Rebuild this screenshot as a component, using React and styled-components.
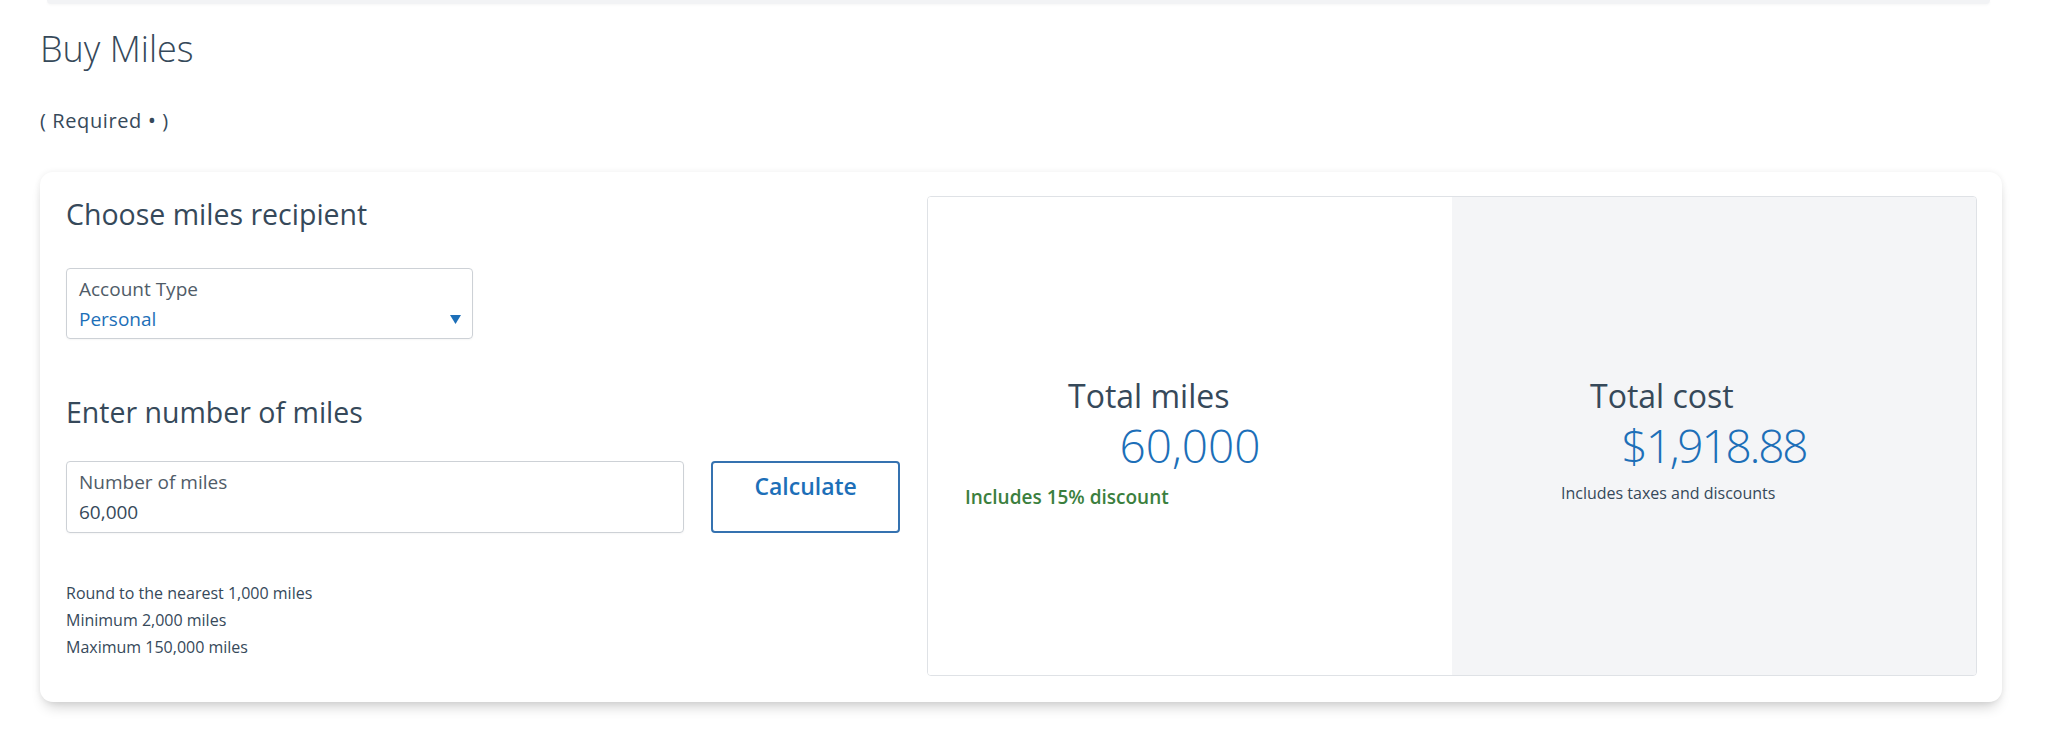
import React from "react";
import styled, { createGlobalStyle } from "styled-components";

const GlobalStyle = createGlobalStyle`
  html, body { margin: 0; padding: 0; background: #ffffff; }
  body { font-family: "Open Sans", "Noto Sans", Arial, sans-serif; color: #36495a; }
  * { box-sizing: border-box; }
`;

const Page = styled.div`
  width: 2047px;
  padding: 0 45px 46px 40px;
`;

const TopStrip = styled.div`
  height: 4px;
  margin: 0 12px 0 7px;
  background: #f2f3f5;
  border-radius: 0 0 8px 8px;
  box-shadow: 0 1px 3px rgba(0, 0, 0, 0.04);
`;

const Title = styled.h1`
  margin: 23px 0 0 0;
  font-size: 36px;
  line-height: 44px;
  font-weight: 300;
  color: #36495a;
`;

const Required = styled.div`
  margin-top: 38px;
  height: 24px;
  font-size: 20px;
  line-height: 24px;
  letter-spacing: 0.6px;
  color: #36495a;
`;

const Dot = styled.span`
  font-size: 22px;
  line-height: 0;
`;

const Card = styled.section`
  margin-top: 39px;
  background: #fff;
  border-radius: 13px;
  padding: 24px 25px 26px 26px;
  display: grid;
  grid-template-columns: 834px 1050px;
  column-gap: 27px;
  box-shadow: 0 9px 14px -5px rgba(0, 0, 0, 0.2), 0 0 6px rgba(0, 0, 0, 0.07);
`;

const LeftCol = styled.div`
  display: flex;
  flex-direction: column;
  padding-bottom: 15px;
`;

const SectionTitle = styled.h2`
  margin: ${(p) => p.$mt || 0}px 0 0 0;
  font-size: 28.5px;
  line-height: 36px;
  font-weight: 400;
  color: #36495a;
`;

const Field = styled.div`
  width: ${(p) => p.$w}px;
  height: ${(p) => p.$h}px;
  margin-top: ${(p) => p.$mt || 0}px;
  border: 1px solid #cdd1d6;
  border-radius: 4px;
  padding: 8px 11px 0 12px;
  display: flex;
  flex-direction: column;
  gap: 6px;
  box-shadow: 0 1px 2px rgba(0, 0, 0, 0.04);
`;

const FieldLabel = styled.div`
  font-size: 19px;
  line-height: 24px;
  color: #505c68;
`;

const FieldValue = styled.div`
  display: flex;
  align-items: center;
  justify-content: space-between;
  font-size: 19px;
  line-height: 24px;
  color: ${(p) => (p.$accent ? "#1d6fb8" : "#36495a")};
`;

const InputRow = styled.div`
  display: flex;
  gap: 27px;
  margin-top: 31px;
`;

const Button = styled.button`
  width: 189px;
  height: 72px;
  border: 2px solid #3572b0;
  border-radius: 4px;
  background: #fff;
  color: #1d6fb8;
  font-family: "Open Sans", Arial, sans-serif;
  font-weight: 600;
  font-size: 23px;
  line-height: 28px;
  padding: 9px 0 0 0;
  display: flex;
  justify-content: center;
  align-items: flex-start;
  cursor: pointer;
`;

const Hints = styled.div`
  margin-top: 47px;
  font-size: 16px;
  line-height: 27px;
  color: #36495a;
`;

const Summary = styled.div`
  display: grid;
  grid-template-columns: 1fr 1fr;
  border: 1px solid #dfe2e6;
  border-radius: 4px;
  overflow: hidden;
`;

const SummaryPane = styled.div`
  background: ${(p) => (p.$shaded ? "#f4f5f7" : "#ffffff")};
  display: flex;
  flex-direction: column;
  align-items: flex-start;
  padding-top: 179px;
`;

const PaneLabel = styled.div`
  margin-left: ${(p) => p.$ml}px;
  font-size: 32px;
  line-height: 40px;
  font-weight: 400;
  color: #36495a;
`;

const PaneAmount = styled.div`
  align-self: center;
  margin-top: 3px;
  font-size: 46px;
  line-height: 52px;
  font-weight: 300;
  letter-spacing: ${(p) => (p.$tight ? "-2.2px" : "0")};
  color: #1d6fb8;
`;

const PaneNote = styled.div`
  margin-left: ${(p) => p.$ml}px;
  margin-top: ${(p) => p.$mt}px;
  font-size: ${(p) => p.$size}px;
  line-height: 24px;
  font-weight: ${(p) => (p.$green ? 600 : 400)};
  color: ${(p) => (p.$green ? "#3b7f3e" : "#36495a")};
`;

const Caret = () => (
  <svg width="11" height="9" viewBox="0 0 11 9" aria-hidden="true">
    <path d="M0 0 H11 L5.5 9 Z" fill="#1d6fb8" />
  </svg>
);

export default function App() {
  return (
    <>
      <GlobalStyle />
      <Page>
        <TopStrip />
        <Title>Buy Miles</Title>
        <Required>
          ( Required <Dot>•</Dot> )
        </Required>
        <Card>
          <LeftCol>
            <SectionTitle>Choose miles recipient</SectionTitle>
            <Field $w={407} $h={71} $mt={36}>
              <FieldLabel>Account Type</FieldLabel>
              <FieldValue $accent>
                Personal
                <Caret />
              </FieldValue>
            </Field>
            <SectionTitle $mt={55}>Enter number of miles</SectionTitle>
            <InputRow>
              <Field $w={619} $h={72}>
                <FieldLabel>Number of miles</FieldLabel>
                <FieldValue>60,000</FieldValue>
              </Field>
              <Button type="button">Calculate</Button>
            </InputRow>
            <Hints>
              <div>Round to the nearest 1,000 miles</div>
              <div>Minimum 2,000 miles</div>
              <div>Maximum 150,000 miles</div>
            </Hints>
          </LeftCol>
          <Summary>
            <SummaryPane>
              <PaneLabel $ml={140}>Total miles</PaneLabel>
              <PaneAmount>60,000</PaneAmount>
              <PaneNote $ml={37} $mt={14} $size={19} $green>
                Includes 15% discount
              </PaneNote>
            </SummaryPane>
            <SummaryPane $shaded>
              <PaneLabel $ml={138}>Total cost</PaneLabel>
              <PaneAmount $tight>$1,918.88</PaneAmount>
              <PaneNote $ml={109} $mt={10} $size={16}>
                Includes taxes and discounts
              </PaneNote>
            </SummaryPane>
          </Summary>
        </Card>
      </Page>
    </>
  );
}
